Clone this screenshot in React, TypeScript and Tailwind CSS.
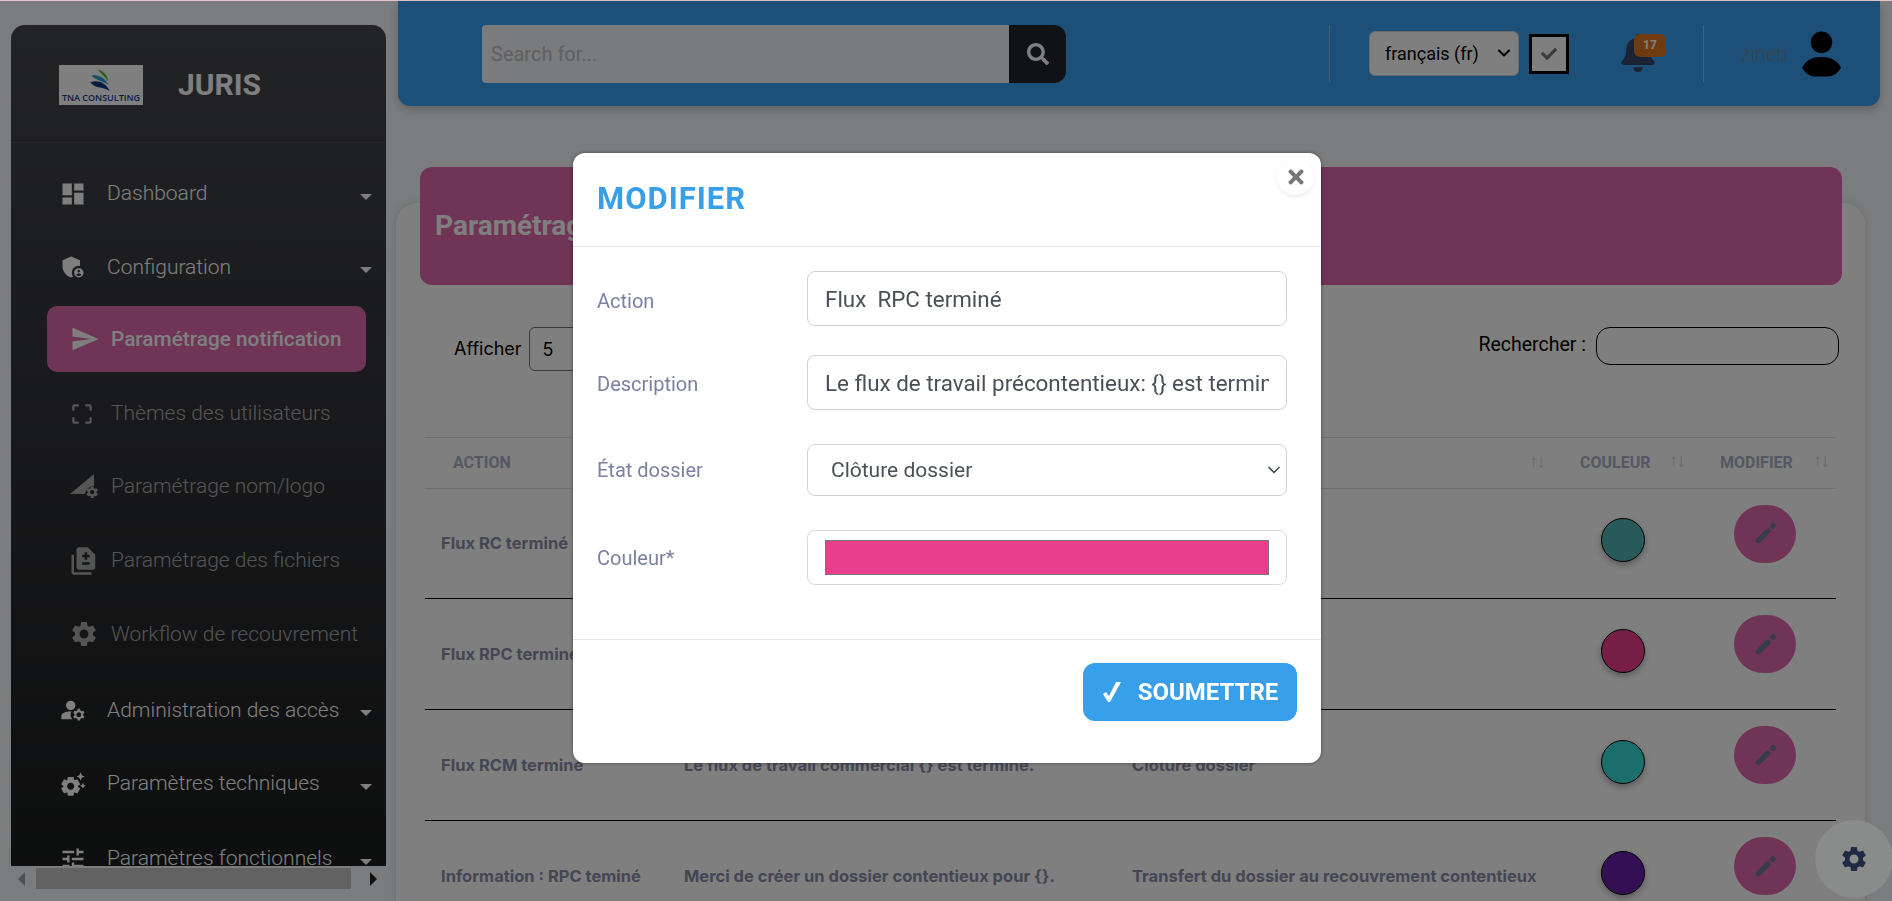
import type { ReactNode } from "react";
import {
  MdAdminPanelSettings,
  MdCropFree,
  MdDashboard,
  MdDifference,
  MdManageAccounts,
  MdSend,
  MdSettings,
  MdSettingsSuggest,
  MdTune,
} from "react-icons/md";
import { FaBell, FaCheck, FaSearch, FaTimes } from "react-icons/fa";
import { ChevronDown } from "lucide-react";

function LogoSettingsIcon() {
  return (
    <svg viewBox="0 0 30 26" className="h-[26px] w-[30px]" fill="currentColor">
      <path d="M1 20 L25 0 V12 A9 9 0 0 0 16 20 Z" />
      <g transform="translate(16 11) scale(0.6)">
        <path d="M19.14 12.94c.04-.3.06-.61.06-.94s-.02-.64-.07-.94l2.03-1.58a.49.49 0 0 0 .12-.61l-1.92-3.32a.49.49 0 0 0-.59-.22l-2.39.96c-.5-.38-1.03-.7-1.62-.94l-.36-2.54a.48.48 0 0 0-.48-.41h-3.84c-.24 0-.43.17-.47.41l-.36 2.54c-.59.24-1.13.57-1.62.94l-2.39-.96a.48.48 0 0 0-.59.22L2.74 8.87c-.12.21-.08.47.12.61l2.03 1.58c-.05.3-.09.63-.09.94s.02.64.07.94l-2.03 1.58a.49.49 0 0 0-.12.61l1.92 3.32c.12.22.37.29.59.22l2.39-.96c.5.38 1.03.7 1.62.94l.36 2.54c.05.24.24.41.48.41h3.84c.24 0 .44-.17.47-.41l.36-2.54c.59-.24 1.13-.56 1.62-.94l2.39.96c.22.08.47 0 .59-.22l1.92-3.32c.12-.22.07-.47-.12-.61l-2.01-1.58zM12 15.6A3.6 3.6 0 1 1 12 8.4a3.6 3.6 0 0 1 0 7.2z" />
      </g>
    </svg>
  );
}

function PencilIcon() {
  return (
    <svg viewBox="0 0 24 24" className="h-[23px] w-[23px]" stroke="currentColor" strokeWidth="5.5" strokeLinecap="round">
      <line x1="4.5" y1="19.5" x2="14.5" y2="9.5" />
      <line x1="19.5" y1="4.5" x2="20" y2="4" />
    </svg>
  );
}

function TickIcon() {
  return (
    <svg viewBox="0 0 19 20" className="h-[20px] w-[19px]" fill="currentColor">
      <path d="M1 12 L4 10 L7 14 L14 0 L19 0 L8 20 L6 20 Z" />
    </svg>
  );
}

function TnaLogo() {
  return (
    <div className="flex h-[40px] w-[84px] flex-col items-center bg-white pt-[3px]">
      <svg viewBox="0 0 24 26" className="h-[25px] w-[24px] shrink-0">
        <path d="M9 1 C15 4 20 8 19 14 C17 9 12 7 9 1 Z" fill="#5cb82e" />
        <path d="M2 8 C9 6 16 10 20 18 C15 13 8 14 2 8 Z" fill="#2c9fd0" />
        <path d="M1 15 C8 12 17 15 21 24 C15 19 6 22 1 15 Z" fill="#123a86" />
      </svg>
      <span className="font-['Open_Sans',sans-serif] text-[9px] leading-[10px] font-semibold whitespace-nowrap text-[#123a86]">
        TNA CONSULTING
      </span>
    </div>
  );
}

const menu: { label: string; icon: ReactNode; kind: "main" | "sub" | "active"; extra?: string }[] = [
  { label: "Dashboard", icon: <MdDashboard size={28} />, kind: "main" },
  { label: "Configuration", icon: <MdAdminPanelSettings size={28} />, kind: "main" },
  { label: "Paramétrage notification", icon: <MdSend size={30} />, kind: "active" },
  { label: "Thèmes des utilisateurs", icon: <MdCropFree size={26} />, kind: "sub" },
  { label: "Paramétrage nom/logo", icon: <LogoSettingsIcon />, kind: "sub" },
  { label: "Paramétrage des fichiers", icon: <MdDifference size={30} />, kind: "sub" },
  { label: "Workflow de recouvrement", icon: <MdSettings size={30} />, kind: "sub" },
  { label: "Administration des accès", icon: <MdManageAccounts size={28} />, kind: "main", extra: "mt-[2.5px]" },
  { label: "Paramètres techniques", icon: <MdSettingsSuggest size={28} />, kind: "main" },
  { label: "Paramètres fonctionnels", icon: <MdTune size={28} />, kind: "main", extra: "mt-[1px]" },
];

const rows = [
  { action: "Flux RC terminé", description: "Le flux de travail recouvrement: {} est terminé.", etat: "Clôture dossier", color: "bg-[#4fb5b0]" },
  { action: "Flux RPC terminé", description: "Le flux de travail précontentieux: {} est terminé.", etat: "Clôture dossier", color: "bg-[#ee3e8c]" },
  { action: "Flux RCM terminé", description: "Le flux de travail commercial {} est terminé.", etat: "Clôture dossier", color: "bg-[#38dcd8]" },
  { action: "Information : RPC teminé", description: "Merci de créer un dossier contentieux pour {}.", etat: "Transfert du dossier au recouvrement contentieux", color: "bg-[#6a1fa8]" },
];

function SortArrows() {
  return <span className="text-[19px] leading-none font-normal tracking-[-2px] text-[#d8d8d8]">↑↓</span>;
}

function Sidebar() {
  return (
    <aside className="ml-[11px] flex w-[375px] shrink-0 flex-col pt-[24px]">
      <div className="h-[841px] overflow-hidden rounded-t-[14px] bg-gradient-to-b from-[#46474c] to-[#1c1d1e]">
        <div className="flex h-[118px] items-center gap-[35px] border-b border-[#4f5157] pt-[2px] pl-[48px]">
          <TnaLogo />
          <span className="text-[30px] font-bold text-white">JURIS</span>
        </div>
        <nav className="pt-[14px]">
          {menu.map((item) =>
            item.kind === "main" ? (
              <div key={item.label} className={`flex h-[73.6px] items-center pr-[14px] pl-[48px] text-[21px] font-light text-white ${item.extra ?? ""}`}>
                <span className="flex w-[48px] shrink-0">{item.icon}</span>
                <span className="flex-1 whitespace-nowrap">{item.label}</span>
                <span className="mt-[6px] h-0 w-0 border-x-[6px] border-t-[6px] border-x-transparent border-t-white" />
              </div>
            ) : item.kind === "active" ? (
              <div key={item.label} className="flex h-[72.6px] items-center pr-[20px] pl-[36px]">
                <div className="-mt-[2px] flex h-[66px] flex-1 items-center rounded-[10px] bg-[#e068ac] pl-[23px] text-[20.8px] font-medium text-white">
                  <span className="flex w-[41px] shrink-0">{item.icon}</span>
                  <span className="whitespace-nowrap">{item.label}</span>
                </div>
              </div>
            ) : (
              <div key={item.label} className="flex h-[73.6px] items-center pl-[58px] text-[21px] font-light text-white/60">
                <span className="flex w-[42px] shrink-0 text-white/60">{item.icon}</span>
                <span className="whitespace-nowrap">{item.label}</span>
              </div>
            ),
          )}
        </nav>
      </div>
      <div className="mt-[2px] flex h-[21px] items-center">
        <span className="ml-[7px] h-0 w-0 border-y-[7px] border-r-[7px] border-y-transparent border-r-[#a0a0a0]" />
        <span className="ml-[11px] h-full w-[315px] bg-[#c4c4c4]" />
        <span className="ml-[19px] h-0 w-0 border-y-[7px] border-l-[7px] border-y-transparent border-l-[#222]" />
      </div>
    </aside>
  );
}

function Topbar() {
  return (
    <header className="flex h-[105px] shrink-0 items-center rounded-b-[12px] bg-[#38a0f0] pl-[84px] shadow-[0_4px_10px_rgba(0,0,0,0.2)]">
      <div className="flex h-[58px] w-[584px] overflow-hidden rounded-l-[4px] rounded-r-[12px]">
        <input placeholder="Search for..." className="flex-1 bg-[#f5f6f8] pl-[9px] text-[20px] outline-none placeholder:text-[#bec0c4]" />
        <div className="flex w-[57px] items-center justify-center bg-[#22252a] text-white">
          <FaSearch size={22} />
        </div>
      </div>
      <span className="ml-[263px] h-[57px] w-px bg-white/40" />
      <div className="relative ml-[39px] h-[45px] w-[150px]">
        <select defaultValue="fr" className="h-full w-full appearance-none rounded-[6px] border border-[#d0d4da] bg-white pl-[15px] text-[18px] text-black">
          <option value="fr">français (fr)</option>
        </select>
        <ChevronDown size={20} strokeWidth={2.5} className="absolute top-[12px] right-[5px] text-black" />
      </div>
      <div className="ml-[10px] flex h-[40px] w-[40px] items-center justify-center border-[3px] border-black bg-white text-[#777]">
        <FaCheck size={16} />
      </div>
      <div className="relative ml-[50px] h-[40px] w-[45px] text-[#344767]">
        <FaBell size={38} />
        <span className="absolute top-0 left-[15px] flex h-[23px] w-[32px] items-center justify-center rounded-[6px] bg-[#dc7420] text-[12px] font-bold text-white">
          17
        </span>
      </div>
      <span className="ml-[39px] h-[57px] w-px bg-white/40" />
      <span className="ml-[37px] text-[20px] font-light text-[#76889a]">zineb</span>
      <svg viewBox="0 0 42 46" className="ml-[13px] h-[46px] w-[41px]" fill="#000">
        <circle cx="21" cy="11" r="11" />
        <path d="M21 26 C30 26 37 29 41 37 C38 42 33 46 28 46 H14 C9 46 4 42 1 37 C5 29 12 26 21 26 Z" />
      </svg>
    </header>
  );
}

function DataCard() {
  return (
    <section className="mt-[97px] mr-[15px] -ml-[2px] flex-1 rounded-t-[22px] bg-white shadow-[0_0_8px_rgba(0,0,0,0.12)]">
      <div className="mx-[24px] -mt-[36px] mr-[23px] flex h-[118px] items-center rounded-[12px] bg-[#e068ac] pl-[15px] text-[28px] font-bold text-white">
        Paramétrage notification
      </div>
      <div className="mt-[42px] flex items-center pr-[26px] pl-[58px] font-['Inter',sans-serif] text-[18px] text-black">
        <span className="mb-[2px]">Afficher</span>
        <select defaultValue="5" className="ml-[7px] h-[44px] w-[80px] rounded-[6px] border border-[#777] pl-[9px] text-[18px]">
          <option value="5">5</option>
        </select>
        <span className="mb-[8px] ml-auto font-['Roboto',sans-serif] text-[19.5px]">Rechercher :</span>
        <input className="mb-[6px] ml-[10px] h-[38px] w-[243px] rounded-[14px] border border-black" />
      </div>
      <div className="mt-[66px] mr-[29px] ml-[29px]">
        <table className="w-full table-fixed border-collapse">
          <thead>
            <tr className="h-[51px] border-y border-[#dcdfe6] text-[16px] font-bold text-[#aab0c4]">
              <th className="w-[243px] pl-[28px] text-left">ACTION</th>
              <th className="w-[448px] text-left" />
              <th className="w-[448px] pr-[20px] text-right"><SortArrows /></th>
              <th className="w-[140px] pr-[20px] pl-[16px] text-left">
                <span className="flex justify-between">COULEUR <SortArrows /></span>
              </th>
              <th className="pr-[8px] pl-[16px] text-left">
                <span className="flex justify-between">MODIFIER <SortArrows /></span>
              </th>
            </tr>
          </thead>
          <tbody>
            {rows.map((row) => (
              <tr key={row.action} className="h-[111px] border-b border-black font-['Inter',sans-serif] text-[16.5px] font-bold text-[#8a8ca8] first:h-[110px]">
                <td className="pl-[16px] whitespace-nowrap">{row.action}</td>
                <td className="pl-[16px] whitespace-nowrap">{row.description}</td>
                <td className="pl-[16px] whitespace-nowrap">{row.etat}</td>
                <td className="pl-[37px]">
                  <span className={`mb-[7px] block h-[44px] w-[44px] rounded-full border border-black shadow-[0_3px_6px_rgba(0,0,0,0.3)] ${row.color}`} />
                </td>
                <td className="pl-[30px]">
                  <span className="mb-[20px] flex h-[58px] w-[62px] items-center justify-center rounded-full bg-[#e068ac] text-[#6f7896]">
                    <PencilIcon />
                  </span>
                </td>
              </tr>
            ))}
          </tbody>
        </table>
      </div>
    </section>
  );
}

function Field({ label, children, className, labelClass }: { label: string; children: ReactNode; className: string; labelClass?: string }) {
  return (
    <div className={`flex items-center pr-[34px] pl-[24px] ${className}`}>
      <label className={`w-[210px] shrink-0 text-[20px] text-[#7b809f] ${labelClass ?? ""}`}>{label}</label>
      {children}
    </div>
  );
}

function EditModal() {
  return (
    <div className="fixed inset-x-0 top-px bottom-0 flex justify-center bg-black/50 pt-[152px] pl-[2px]">
      <div className="relative h-[610px] w-[748px] rounded-[12px] bg-white shadow-[0_0_4px_rgba(0,0,0,0.4)]">
        <button className="absolute top-[5px] right-[7px] flex h-[37px] w-[37px] items-center justify-center rounded-full bg-white text-[#777] shadow-[0_2px_4px_rgba(0,0,0,0.08)]">
          <FaTimes size={22} />
        </button>
        <div className="flex h-[94px] items-center border-b border-[#e2e4e8] pl-[24px] text-[31px] font-bold tracking-[1px] text-[#38a0ea]">
          MODIFIER
        </div>
        <Field label="Action" className="mt-[24px] h-[55px]" labelClass="pt-[4px]">
          <input
            defaultValue="Flux  RPC terminé"
            className="h-full min-w-0 flex-1 rounded-[8px] border border-[#ced1d8] px-[17px] text-[22.4px] text-[#495057]"
          />
        </Field>
        <Field label="Description" className="mt-[29px] h-[55px]" labelClass="pt-[2px]">
          <input
            defaultValue="Le flux de travail précontentieux: {} est terminé."
            className="h-full min-w-0 flex-1 rounded-[8px] border border-[#ced1d8] px-[17px] text-[22.4px] text-[#495057]"
          />
        </Field>
        <Field label="État dossier" className="mt-[34px] h-[52px]">
          <div className="relative h-full flex-1">
            <select defaultValue="cloture" className="h-full w-full appearance-none rounded-[8px] border border-[#ced1d8] bg-white pt-[2px] pl-[23px] text-[21px] text-[#495057]">
              <option value="cloture">Clôture dossier</option>
            </select>
            <ChevronDown size={20} strokeWidth={2} className="absolute top-[16px] right-[3px] text-[#495057]" />
          </div>
        </Field>
        <Field label="Couleur*" className="mt-[34px] h-[55px]">
          <div className="flex h-full flex-1 items-center rounded-[8px] border border-[#d6d8de] px-[17px]">
            <span className="h-[35px] w-full border border-[#777] bg-[#e83e8c]" />
          </div>
        </Field>
        <div className="mt-[54px] flex h-[124px] justify-end border-t border-[#e2e4e8] pt-[23px] pr-[24px]">
          <button className="flex h-[58px] w-[214px] items-center justify-center gap-[17px] rounded-[12px] bg-[#38a0ea] text-[24px] font-bold text-white">
            <TickIcon />
            SOUMETTRE
          </button>
        </div>
      </div>
    </div>
  );
}

export default function App() {
  return (
    <div className="flex h-[901px] flex-col overflow-hidden bg-[#f6f8fb] font-['Roboto',sans-serif]">
      <div className="h-px shrink-0 bg-[#e8c4cc]" />
      <div className="flex min-h-0 flex-1">
        <Sidebar />
        <main className="ml-[12px] flex min-w-0 flex-1 flex-col pr-[12px]">
          <Topbar />
          <DataCard />
        </main>
      </div>
      <EditModal />
      <div className="fixed right-[-1px] bottom-[3px] flex h-[78px] w-[78px] items-center justify-center rounded-full bg-[#8a8b8b] text-[#1f2a44]">
        <MdSettings size={30} />
      </div>
    </div>
  );
}
